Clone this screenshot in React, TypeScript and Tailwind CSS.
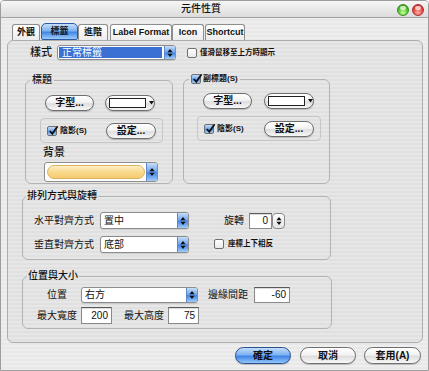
import React from 'react';

const winStripes = 'bg-[repeating-linear-gradient(180deg,#eeeeee_0px,#eeeeee_2px,#e8e8e8_2px,#e8e8e8_4px)]';
const panelStripes = 'bg-[repeating-linear-gradient(180deg,#e7e7e7_0px,#e7e7e7_2px,#e0e0e0_2px,#e0e0e0_4px)]';

const UpDown = () => (
    <svg width="6" height="10" viewBox="0 0 6 10">
        <path d="M3 1L5.6 4.2H0.4Z M3 9L5.6 5.8H0.4Z" fill="#111" />
    </svg>
);

const Light: React.FC<{ green?: boolean }> = ({ green }) => (
    <div
        className={`relative w-[12px] h-[12px] rounded-full border ${
            green
                ? 'border-[#3c8a26] bg-[radial-gradient(circle_at_50%_75%,#c8ff9a,#4fc22a_55%,#2f8d17)]'
                : 'border-[#a83030] bg-[radial-gradient(circle_at_50%_75%,#ffb0a8,#e8413a_55%,#b01e1a)]'
        }`}
    >
        <div className="absolute left-[2px] top-[1px] w-[6px] h-[4px] rounded-full bg-white/70" />
    </div>
);

const Checkbox: React.FC<{ checked?: boolean; className?: string }> = ({ checked, className = '' }) => (
    <div
        className={`relative w-[10px] h-[10px] shrink-0 rounded-[2px] border border-[#6f6f6f] ${
            checked ? 'bg-[linear-gradient(#c7def9,#6ea6ec_50%,#4d8fe6_51%,#a6cdf7)]' : 'bg-[linear-gradient(#ffffff,#e9e9e9)]'
        } ${className}`}
    >
        {checked && (
            <svg className="absolute left-[0px] top-[-2px]" width="11" height="11" viewBox="0 0 11 11">
                <path d="M1.8 6L4.3 8.8L9.6 1.2" stroke="#111" strokeWidth="1.8" fill="none" />
            </svg>
        )}
    </div>
);

const AquaButton: React.FC<{ children: React.ReactNode; className?: string; primary?: boolean }> = ({
    children,
    className = '',
    primary,
}) => (
    <div
        className={`h-[16px] shrink-0 rounded-full border flex items-center justify-center text-[10px] font-bold leading-none shadow-[0_1px_1px_rgba(0,0,0,0.2)] ${
            primary
                ? 'border-[#2b4f8c] bg-[linear-gradient(#c3ddfb,#7eb2f1_45%,#3f84e6_55%,#93c6f9)]'
                : 'border-[#6e6e6e] bg-[linear-gradient(#ffffff,#f3f3f3_45%,#dedede_55%,#f7f7f7)]'
        } ${className}`}
    >
        {children}
    </div>
);

const PopUp: React.FC<{ text: string; className?: string; selected?: boolean }> = ({ text, className = '', selected }) => (
    <div className={`flex shrink-0 rounded-[3px] border border-[#8d8d8d] bg-white shadow-[0_1px_1px_rgba(0,0,0,0.12)] ${className}`}>
        <div
            className={`flex-1 flex items-center pl-[3px] text-[10px] leading-none ${
                selected ? 'm-[1px] mr-[2px] bg-[#3a6fd4] text-white' : ''
            }`}
        >
            {text}
        </div>
        <div className="w-[11px] rounded-r-[2px] border-l border-[#5f87cc] bg-[linear-gradient(#c8def9,#74a8ee_45%,#4286e3_55%,#a0cdfa)] flex items-center justify-center">
            <UpDown />
        </div>
    </div>
);

const TextField: React.FC<{ value: string; className?: string }> = ({ value, className = '' }) => (
    <div
        className={`shrink-0 border border-[#8a8a8a] border-t-[#5a5a5a] bg-white flex items-center justify-end pr-[3px] text-[10px] leading-none shadow-[inset_0_1px_1px_rgba(0,0,0,0.15)] ${className}`}
    >
        {value}
    </div>
);

const ColorWell: React.FC<{ className?: string }> = ({ className = '' }) => (
    <AquaButton className={`w-[50px] justify-start pl-[3px] ${className}`}>
        <div className="w-[37px] h-[10px] border border-[#222] bg-white" />
        <svg className="ml-[3px]" width="5" height="4" viewBox="0 0 5 4">
            <path d="M0 0H5L2.5 3.5Z" fill="#111" />
        </svg>
    </AquaButton>
);

const Tab: React.FC<{ children: React.ReactNode; className?: string }> = ({ children, className = '' }) => (
    <div
        className={`h-[16px] shrink-0 flex items-center justify-center rounded-t-[3px] border border-b-0 border-[#8d8d8d] bg-[linear-gradient(#ffffff,#ececec)] text-[9px] font-bold leading-none ${className}`}
    >
        {children}
    </div>
);

export default function App() {
    return (
        <div
            className={`w-[429px] h-[371px] flex flex-col border border-[#9d9d9d] rounded-t-[4px] overflow-hidden ${winStripes} font-[family-name:'Liberation_Sans','Noto_Sans_CJK_TC',sans-serif] text-[#111]`}
        >
            {/* title bar */}
            <div className="h-[17px] shrink-0 flex items-center border-b border-[#a2a2a2] bg-[linear-gradient(#f6f6f6,#dcdcdc)]">
                <div className="w-[180px]" />
                <span className="text-[10px] leading-none font-medium">元件性質</span>
                <div className="flex-1" />
                <div className="flex gap-[3px] pr-[4px] mt-[2px]">
                    <Light green />
                    <Light />
                </div>
            </div>

            {/* tabs */}
            <div className="h-[17px] mt-[5px] shrink-0 flex items-end pl-[11px]">
                <Tab className="w-[28px]">外觀</Tab>
                <div className="ml-[1px] w-[37px] h-[17px] shrink-0 rounded-[5px] rounded-b-[2px] border border-[#2d5aa6] bg-[linear-gradient(#c6dffb,#7eb2f1_45%,#4287e6_55%,#9dccfa)] flex items-center justify-center text-[9px] font-bold leading-none">
                    標籤
                </div>
                <Tab className="w-[30px]">進階</Tab>
                <Tab className="ml-[2px] w-[62px]">Label Format</Tab>
                <Tab className="w-[32px]">Icon</Tab>
                <Tab className="ml-[1px] w-[40px]">Shortcut</Tab>
            </div>

            {/* panel */}
            <div className={`ml-[6px] w-[416px] h-[303px] shrink-0 rounded-[6px] border border-[#adadad] ${panelStripes} flex flex-col`}>
                <div className="mt-[4px] h-[15px] flex items-center">
                    <div className="w-[44px] text-right text-[11px] font-medium leading-none">樣式</div>
                    <PopUp text="正常標籤" selected className="ml-[5px] w-[119px] h-[15px]" />
                    <Checkbox className="ml-[11px]" />
                    <span className="ml-[3px] text-[7.5px] font-bold leading-none">僅滑鼠移至上方時顯示</span>
                </div>

                <div className="mt-[14px] flex pl-[17px] gap-[10px]">
                    <fieldset className="w-[148px] h-[110px] rounded-[6px] border border-[#b3b3b3]">
                        <legend className="ml-[4px] px-[2px] text-[10px] leading-[12px] font-medium">標題</legend>
                        <div className="flex flex-col">
                            <div className="mt-[9px] ml-[19px] flex items-center">
                                <AquaButton className="w-[49px]">字型...</AquaButton>
                                <ColorWell className="ml-[11px]" />
                            </div>
                            <div className="mt-[7px] ml-[14px] w-[123px] h-[25px] rounded-[4px] border border-[#c6c6c6] flex items-center pl-[6px]">
                                <Checkbox checked />
                                <span className="ml-[3px] text-[8px] font-bold leading-none">陰影(S)</span>
                                <AquaButton className="ml-auto mr-[6px] w-[50px]">設定...</AquaButton>
                            </div>
                            <div className="mt-[3px] ml-[17px] text-[11px] leading-[12px] font-medium">背景</div>
                            <div className="mt-[4px] ml-[18px] w-[114px] h-[20px] flex rounded-[3px] border border-[#8d8d8d] bg-white">
                                <div className="flex-1 p-[2px] pr-[1px]">
                                    <div className="h-full rounded-full border border-[#dcb461] bg-[linear-gradient(#fdeec4,#fad98d_50%,#f6cb6e)]" />
                                </div>
                                <div className="w-[11px] rounded-r-[2px] border-l border-[#5f87cc] bg-[linear-gradient(#c8def9,#74a8ee_45%,#4286e3_55%,#a0cdfa)] flex items-center justify-center">
                                    <UpDown />
                                </div>
                            </div>
                        </div>
                    </fieldset>

                    <fieldset className="w-[147px] h-[110px] rounded-[6px] border border-[#b3b3b3]">
                        <legend className="ml-[5px] px-[2px] leading-[12px]">
                            <div className="flex items-center">
                                <Checkbox checked />
                                <span className="ml-[2px] text-[8px] font-bold leading-none">副標題(S)</span>
                            </div>
                        </legend>
                        <div className="flex flex-col">
                            <div className="mt-[9px] ml-[19px] flex items-center">
                                <AquaButton className="w-[49px]">字型...</AquaButton>
                                <ColorWell className="ml-[12px]" />
                            </div>
                            <div className="mt-[7px] ml-[13px] w-[124px] h-[25px] rounded-[4px] border border-[#c6c6c6] flex items-center pl-[6px]">
                                <Checkbox checked />
                                <span className="ml-[3px] text-[8px] font-bold leading-none">陰影(S)</span>
                                <AquaButton className="ml-auto mr-[6px] w-[50px]">設定...</AquaButton>
                            </div>
                        </div>
                    </fieldset>
                </div>

                <fieldset className="mt-[6px] ml-[14px] w-[309px] h-[70px] rounded-[6px] border border-[#b3b3b3]">
                    <legend className="ml-[3px] px-[1px] text-[10px] leading-[12px] font-medium">排列方式與旋轉</legend>
                    <div className="mt-[10px] h-[17px] flex items-center">
                        <div className="w-[71px] text-right text-[10px] leading-none">水平對齊方式</div>
                        <PopUp text="置中" className="ml-[6px] w-[89px] h-[17px]" />
                        <span className="ml-[35px] text-[10px] leading-none">旋轉</span>
                        <TextField value="0" className="ml-[5px] w-[23px] h-[16px]" />
                        <div className="w-[13px] h-[16px] rounded-[4px] border border-[#8a8a8a] bg-[linear-gradient(#ffffff,#e4e4e4)] flex items-center justify-center">
                            <UpDown />
                        </div>
                    </div>
                    <div className="mt-[7px] h-[17px] flex items-center">
                        <div className="w-[71px] text-right text-[10px] leading-none">垂直對齊方式</div>
                        <PopUp text="底部" className="ml-[6px] w-[89px] h-[17px]" />
                        <Checkbox className="ml-[25px] -mt-[2px]" />
                        <span className="ml-[4px] -mt-[2px] text-[7.5px] font-bold leading-none">座標上下相反</span>
                    </div>
                </fieldset>

                <fieldset className="mt-[10px] ml-[14px] w-[310px] h-[59px] rounded-[6px] border border-[#b3b3b3]">
                    <legend className="ml-[4px] px-[1px] text-[10px] leading-[12px] font-medium">位置與大小</legend>
                    <div className="mt-[5px] h-[16px] flex items-center pl-[13px]">
                        <div className="w-[42px] text-center text-[10px] leading-none">位置</div>
                        <PopUp text="右方" className="ml-[3px] w-[117px] h-[16px]" />
                        <span className="ml-[10px] w-[40px] text-[10px] leading-none">邊緣間距</span>
                        <TextField value="-60" className="ml-[6px] w-[36px] h-[16px]" />
                    </div>
                    <div className="mt-[4px] h-[17px] flex items-center pl-[13px]">
                        <div className="w-[42px] text-center text-[10px] leading-none">最大寬度</div>
                        <TextField value="200" className="ml-[3px] w-[31px] h-[17px]" />
                        <span className="ml-[12px] w-[40px] text-[10px] leading-none">最大高度</span>
                        <TextField value="75" className="ml-[4px] w-[31px] h-[17px]" />
                    </div>
                </fieldset>
            </div>

            {/* buttons */}
            <div className="mt-[4px] flex justify-end pr-[7px]">
                <AquaButton primary className="w-[56px] h-[17px]">確定</AquaButton>
                <AquaButton className="ml-[9px] w-[56px] h-[17px]">取消</AquaButton>
                <AquaButton className="ml-[8px] w-[57px] h-[17px]">套用(A)</AquaButton>
            </div>
        </div>
    );
}
